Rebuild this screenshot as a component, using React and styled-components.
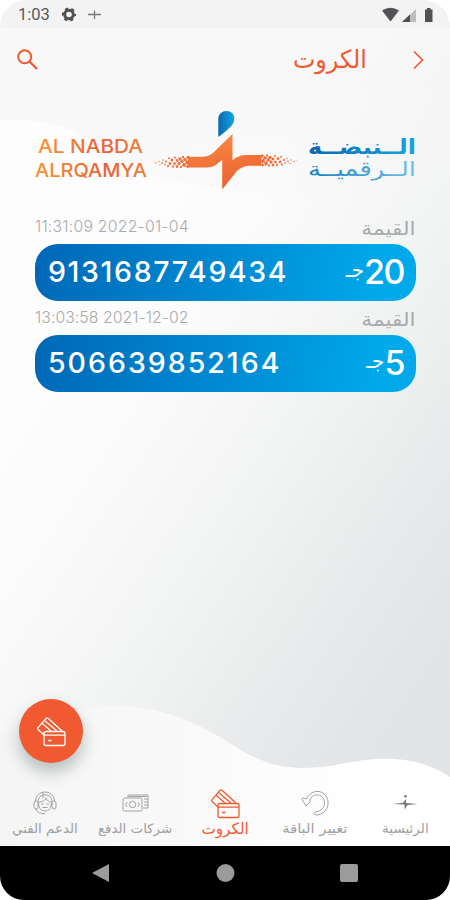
import React from "react"
import styled, { createGlobalStyle } from "styled-components"


const primaryColor = '#f15a31'
const mutedColor = '#a9abae'
const latin = '"Inter", "Liberation Sans", sans-serif'
const arabic = '"DejaVu Sans", sans-serif'

const GlobalStyle = createGlobalStyle`
    body {
        margin: 0;
        background: #fff;
    }
    * {
        box-sizing: border-box;
    }
`
const Screen = styled.div`
    position: relative;
    display: flex;
    flex-direction: column;
    width: 450px;
    height: 900px;
    overflow: hidden;
    border-radius: 27px 27px 24px 24px;
    background: linear-gradient(124deg, #fefefe 0%, #fcfcfc 36%, #f3f4f4 54%, #e9eaeb 70%, #e3e4e6 82%, #e2e3e5 100%);
    font-family: ${latin};
`
const Backdrop = styled.svg`
    position: absolute;
    inset: 0;
`
const StatusBar = styled.div`
    position: relative;
    display: flex;
    align-items: center;
    height: 28px;
    padding: 1px 16px 0 18px;
    background: rgba(242, 242, 242, 0.85);
    color: #58595b;
`
const Clock = styled.span`
    width: 43px;
    font: 400 16.5px Roboto, sans-serif;
`
const StatusIcons = styled.svg`
    margin-left: auto;
`
const Header = styled.header`
    position: relative;
    display: flex;
    align-items: center;
    height: 64px;
    padding: 0 25px 0 16px;
`
const Title = styled.h1`
    margin: 0 45px 0 auto;
    width: 74px;
    display: flex;
    justify-content: center;
    direction: rtl;
    font: 400 25px/40px ${arabic};
    color: ${primaryColor};
`
const Stretch = styled.span`
    display: inline-block;
    flex: none;
    white-space: nowrap;
    transform: scaleX(${({ $x }) => $x || 1});
    transform-origin: ${({ $origin }) => $origin || 'center'};
`
const Brand = styled.svg`
    position: relative;
    display: block;
    flex: none;
    margin: 8px 0 0 30px;
`
const Cards = styled.main`
    position: relative;
    flex: 1;
    padding: 10px 34px 0 35px;
`
const CardMeta = styled.div`
    display: flex;
    justify-content: space-between;
    align-items: center;
    height: 34px;
    color: ${mutedColor};
`
const CardDate = styled.span`
    font: 300 15.8px/20px ${latin};
    letter-spacing: ${({ $spacing }) => $spacing}px;
`
const CardLabel = styled.span`
    padding-top: 1px;
    direction: rtl;
    font: 400 19px/24px ${arabic};
`
const Pill = styled.div`
    display: flex;
    justify-content: space-between;
    align-items: center;
    height: 57px;
    padding: 0 12px 2px 13px;
    border-radius: 23px;
    background: linear-gradient(100deg, #0068b6 0%, #0089d2 48%, #00a9ea 90%);
    color: #fff;
`
const Code = styled.span`
    font: 450 28.5px/40px ${latin};
    letter-spacing: ${({ $spacing }) => $spacing}px;
`
const Amount = styled.span`
    display: flex;
    align-items: center;
    font: 450 34px/40px ${latin};
    letter-spacing: -1.5px;
`
const Currency = styled.span`
    margin: -4px 0 0 0;
    font: 400 20px/24px ${arabic};
    letter-spacing: 0;
`
const Fab = styled.button`
    position: absolute;
    left: 19px;
    top: 699px;
    display: flex;
    align-items: center;
    justify-content: center;
    width: 64px;
    height: 64px;
    padding: 0;
    border: 0;
    border-radius: 50%;
    background: ${primaryColor};
    color: #fff;
    box-shadow: 0 9px 16px rgba(90, 105, 105, 0.4);
`
const Tabs = styled.nav`
    position: relative;
    display: flex;
    direction: rtl;
    height: 63px;
`
const Tab = styled.a`
    display: flex;
    flex-direction: column;
    align-items: center;
    width: 90px;
    color: ${({ $active }) => $active ? primaryColor : '#9fa1a4'};
`
const TabIcon = styled.div`
    display: flex;
    align-items: center;
    justify-content: center;
    height: 36px;
    padding-top: 4px;
`
const TabLabel = styled.span`
    font: 400 ${({ $active }) => $active ? 15.5 : 13}px/20px ${arabic};
`
const SystemBar = styled.footer`
    position: relative;
    display: flex;
    align-items: center;
    justify-content: center;
    height: 54px;
    background: #000;
`


const CardsIcon = ({ width = 30, height = 32 }) => (
    <svg width={width} height={height} viewBox="0 0 30 32" fill="none" stroke="currentColor" strokeWidth="1.3" strokeLinejoin="round">
        <path d="M8 20 L2 14.5 Q1.2 13.5 2 12.6 L10 3.4 Q11 2.5 12 3.3 L26 16" />
        <path d="M8.5 5.5 L21 16 M6 8.2 L15 16" />
        <rect x="8" y="16.5" width="21" height="14" rx="2" />
        <path d="M8 20.2 H29 M12 25.5 H15.5" />
    </svg>
)

const PulseIcon = () => (
    <svg width="25" height="18" viewBox="0 0 25 18">
        <path d="M0 10 L10 8.7 L13 5 V9 L24.500 10 L14.500 11 L11.500 15.500 V10.500 Z" fill="#77787b" />
        <circle cx="12.500" cy="2.200" r="1.300" fill="#77787b" />
    </svg>
)

const RefreshIcon = () => (
    <svg width="28" height="26" viewBox="0 0 28 26" fill="none" stroke="currentColor" strokeWidth="1">
        <path d="M5.500 9 C8 3.500 13 .8 18 1.500 C24 2.500 27.500 8 27 14 C26.500 20 22 24.500 15.500 25 Q13 25 13 23.500 Q13 22 15 21.800 C20.500 21 23.500 17.500 23.500 13 C23.500 8 20 4.800 16 4.800 C12.500 5 10 7 8.700 10 L9.500 11.500 L5 16 L.8 9 L2.500 8 Z" />
    </svg>
)

const MoneyIcon = () => (
    <svg width="27" height="18" viewBox="0 0 27 18" fill="none" stroke="currentColor" strokeWidth="1">
        <path d="M6 3.500 V1 H26 V14 H21 M7 2.500 H25 M22 5 H26 M22 8 H26 M22 11 H26" />
        <rect x="1" y="4" width="19" height="13" rx="1.500" />
        <circle cx="10.500" cy="10.500" r="3.200" />
        <path d="M5 8 L3.500 10.500 L5 13 M16 8 L17.500 10.500 L16 13" />
    </svg>
)

const SupportIcon = () => (
    <svg width="24" height="24" viewBox="0 0 24 24" fill="none" stroke="currentColor" strokeWidth="1">
        <path d="M2.500 10 C3 4.500 7 1 12 1 C17 1 21 4.500 21.500 10 M5 10 C5.500 6 8 3.800 12 3.800 C16 3.800 18.500 6 19 10 M10 1 V7" />
        <rect x="1" y="10" width="4" height="8" rx="2" />
        <rect x="19" y="10" width="4" height="8" rx="2" />
        <path d="M5.500 11 C10 11 12 9.500 13 7 C14 9.500 16 11 18.500 11 C18.500 17 16 20 12 20 C8 20 5.500 17 5.500 11 Z M8 13 H10.500 M13.500 13 H16 M9.500 16.500 H14.500" />
        <path d="M3 18 C4 21 6 22 9 22.500 H12" />
    </svg>
)

// [x, y, r] of the digital dust, going outwards from the arm of the pulse
const dust = [
    [1, 1, 1.4], [2, 6, 1.6], [1.5, 10, 1.3], [4, 3, 1.5], [5, 8.500, 1.6], [6, .5, 1], [7, 5, 1.4],
    [8, 10.500, 1], [9, 2.500, 1.500], [10, 7, 1.400], [12, 10, 1.200], [12, 4, 1.200], [14, 1, .9], [14.500, 7, 1.200],
    [16, 10, 1], [17, 3.500, 1.200], [19, 7, 1.200], [20, 1.800, .8], [21, 9.500, .9], [23, 5, .9], [24, 8, .7],
    [26, 3.500, .6], [27, 6.500, .8], [29, 8.500, .5], [30, 5, .6], [33, 6.500, .6], [35, 5.500, .4],
]

const Dust = ({ transform }) => (
    <g transform={transform} fill="#f16c36">
        {dust.map(([x, y, r]) => (
            <rect key={`${x}-${y}`} x={x - r} y={y - r} width={r * 2} height={r * 2} transform={`rotate(${x * 31} ${x} ${y})`} />
        ))}
    </g>
)

const BrandLogo = () => (
    <Brand width="390" height="100" viewBox="30 100 390 100">
        <defs>
            <linearGradient id="orange" x2="1" y2="0">
                <stop offset="0" stopColor="#f79532" />
                <stop offset=".65" stopColor="#e8603a" />
                <stop offset="1" stopColor="#f08035" />
            </linearGradient>
            <linearGradient id="blue" x2="1" y2="0">
                <stop offset="0" stopColor="#0868b2" />
                <stop offset="1" stopColor="#16a5e1" />
            </linearGradient>
            <linearGradient id="sky" x2="1" y2="0">
                <stop offset="0" stopColor="#1580c4" />
                <stop offset="1" stopColor="#72c0e8" />
            </linearGradient>
            <linearGradient id="pulse" x2=".2" y2="1">
                <stop offset="0" stopColor="#f78b45" />
                <stop offset="1" stopColor="#ee6231" />
            </linearGradient>
        </defs>
        <g fill="url(#orange)" fontFamily="Inter" fontSize="18.500" fontWeight="450">
            <text x="38" y="153" textLength="105" lengthAdjust="spacingAndGlyphs">AL NABDA</text>
            <text x="35" y="176.500" textLength="112" lengthAdjust="spacingAndGlyphs">ALRQAMYA</text>
        </g>
        <path d="M218.300 137 V119 C218.300 114 222 111 226.500 111 C231 111 234.800 114 234.300 119 C234 125 229 129 218.300 137 Z" fill="url(#blue)" />
        <path d="M188 156.700 H203 Q210 156.700 215 151 L232.500 134 V160.500 Q238 155 246 155 H261.500 V165.700 H251 Q242 165.700 237 171 L222.200 189.500 V160 L217 164 Q213 167.500 206 167.500 H188 Z" fill="url(#pulse)" />
        <Dust transform="translate(261 155)" />
        <Dust transform="matrix(-1 0 0 1 189 156.500)" />
        <g fontFamily="DejaVu Sans" direction="rtl">
            <text x="416" y="153.500" fontSize="21" fontWeight="700" fill="url(#blue)" textLength="108" lengthAdjust="spacingAndGlyphs">الــنبضــة</text>
            <text x="416" y="176" fontSize="20" fill="url(#sky)" textLength="108" lengthAdjust="spacingAndGlyphs">الــرقميــة</text>
        </g>
    </Brand>
)

const cards = [
    { date: '11:31:09 2022-01-04', code: '9131687749434', amount: 20, dateSpacing: 0.22, spacing: 1.65 },
    { date: '13:03:58 2021-12-02', code: '506639852164', amount: 5, dateSpacing: 0.05, spacing: 2 },
]

const tabs = [
    { label: 'الرئيسية', icon: <PulseIcon />, stretch: 1.04 },
    { label: 'تغيير الباقة', icon: <RefreshIcon />, stretch: 1.13 },
    { label: 'الكروت', icon: <CardsIcon />, stretch: 0.98, active: true },
    { label: 'شركات الدفع', icon: <MoneyIcon />, stretch: 1.03 },
    { label: 'الدعم الفني', icon: <SupportIcon />, stretch: 1.03 },
]

const App = () => (
    <>
        <GlobalStyle />
        <Screen>
            <Backdrop width="450" height="900">
                <defs>
                    <linearGradient id="wave">
                        <stop offset="0" stopColor="#f5f5f6" />
                        <stop offset=".4" stopColor="#f9f9f9" />
                        <stop offset=".8" stopColor="#fff" />
                    </linearGradient>
                    <linearGradient id="shade" y2="1" x2=".7">
                        <stop offset="0" stopColor="#f9f9f9" />
                        <stop offset="1" stopColor="#efefef" stopOpacity="0" />
                    </linearGradient>
                </defs>
                <path d="M0 0 H450 V220 C300 190 180 200 110 155 C75 125 40 118 0 120 Z" fill="url(#shade)" />
                <path d="M0 735 C35 715 80 706 120 706 C160 706 200 724 228 742 C265 767 290 771 330 766 C365 759 410 750 450 777 V850 H0 Z" fill="url(#wave)" />
            </Backdrop>

            <StatusBar>
                <Clock>1:03</Clock>
                <svg width="42" height="16" viewBox="0 0 42 16">
                    <circle cx="8" cy="7.500" r="4.300" fill="none" stroke="#505154" strokeWidth="3" />
                    <circle cx="8" cy="7.500" r="6" fill="none" stroke="#505154" strokeWidth="2.200" strokeDasharray="3.100 3.183" strokeDashoffset="1.500" />
                    <path d="M27 7.500 H40 M33.500 3.500 V12" stroke="#77787b" strokeWidth="1.300" />
                </svg>
                <StatusIcons width="52" height="16" viewBox="0 0 52 16">
                    <path d="M0 3.500 Q8.500 -2 17 3.500 L8.500 14.500 Z" fill="#505154" />
                    <path d="M20 15 L34 2 V15 Z" fill="#bcbdbf" />
                    <path d="M20 15 L28 7.500 V15 Z" fill="#505154" />
                    <path d="M43 2.500 H45 V1 H48.500 V2.500 H50.500 V15 H43 Z" fill="#505154" />
                </StatusIcons>
            </StatusBar>

            <Header>
                <svg width="24" height="24" viewBox="0 0 24 24" fill="none" stroke={primaryColor} strokeWidth="2">
                    <circle cx="8.700" cy="8.800" r="6.500" />
                    <path d="M13.500 13.500 L21 21" strokeWidth="2.400" />
                </svg>
                <Title><Stretch $x={0.95}>الكروت</Stretch></Title>
                <svg width="13" height="20" viewBox="0 0 13 20" fill="none" stroke={primaryColor} strokeWidth="1.700">
                    <path d="M2 1.500 L10.500 10 L2 18.500" />
                </svg>
            </Header>

            <BrandLogo />

            <Cards>
                {cards.map(({ date, code, amount, dateSpacing, spacing }) => (
                    <React.Fragment key={code}>
                        <CardMeta>
                            <CardDate $spacing={dateSpacing}>{date}</CardDate>
                            <CardLabel><Stretch $origin="right" $x={1.14}>القيمة</Stretch></CardLabel>
                        </CardMeta>
                        <Pill>
                            <Code $spacing={spacing}>{code}</Code>
                            <Amount><Currency>جـ</Currency>{amount}</Amount>
                        </Pill>
                    </React.Fragment>
                ))}
            </Cards>

            <Fab><CardsIcon /></Fab>

            <Tabs>
                {tabs.map(({ label, icon, stretch, active }) => (
                    <Tab key={label} $active={active}>
                        <TabIcon>{icon}</TabIcon>
                        <TabLabel $active={active}><Stretch $x={stretch}>{label}</Stretch></TabLabel>
                    </Tab>
                ))}
            </Tabs>

            <SystemBar>
                <svg width="270" height="20" viewBox="-5 0 270 20" fill="#9b9b9b">
                    <path d="M-3 10 L14 1 V19 Z" />
                    <circle cx="130.500" cy="10" r="9" />
                    <rect x="245" y="1" width="18" height="18" rx="2" />
                </svg>
            </SystemBar>
        </Screen>
    </>
)

export default App
